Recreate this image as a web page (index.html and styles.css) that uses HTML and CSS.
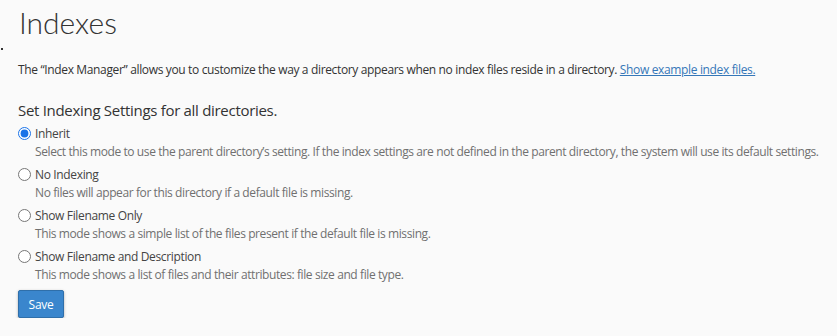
FILE: index.html
```html
<!DOCTYPE html>
<html lang="en">
<head>
    <meta charset="UTF-8">
    <meta name="viewport" content="width=device-width, initial-scale=1.0">
    <title>Indexes</title>
    <link rel="stylesheet" href="styles.css">
</head>
<body>

<span class="marca"></span>

<div class="pagina">
    <h1>Indexes</h1>

    <p class="intro">The “Index Manager” allows you to customize the way a directory appears when no index files reside in a directory. <a href="#">Show example index files.</a></p>

    <h2>Set Indexing Settings for all directories.</h2>

    <form class="opcoes">
        <!-- Opções de indexação -->
        <div class="opcao">
            <label><input type="radio" name="idx" checked> Inherit</label>
            <p class="ajuda">Select this mode to use the parent directory’s setting. If the index settings are not defined in the parent directory, the system will use its default settings.</p>
        </div>
        <div class="opcao">
            <label><input type="radio" name="idx"> No Indexing</label>
            <p class="ajuda">No files will appear for this directory if a default file is missing.</p>
        </div>
        <div class="opcao">
            <label><input type="radio" name="idx"> Show Filename Only</label>
            <p class="ajuda">This mode shows a simple list of the files present if the default file is missing.</p>
        </div>
        <div class="opcao">
            <label><input type="radio" name="idx"> Show Filename and Description</label>
            <p class="ajuda">This mode shows a list of files and their attributes: file size and file type.</p>
        </div>

        <button type="button" class="btn-salvar">Save</button>
    </form>
</div>

</body>
</html>
```

FILE: styles.css
```css
body {
    font-family: "Open Sans", Arial, sans-serif;
    letter-spacing: -0.35px;
    background-color: #fafafa;
    color: #333;
    margin: 0;
    padding: 0;
}

.marca {
    position: absolute;
    left: 1px;
    top: 48px;
    width: 2px;
    height: 2px;
    background-color: #333;
}

.pagina {
    padding: 0 0 0 18px;
}

h1 {
    font-family: Lato, "Open Sans", sans-serif;
    font-size: 30px;
    font-weight: 300;
    letter-spacing: 0;
    line-height: 41px;
    margin: 2px 0 0 1px;
    color: #333;
}

.intro {
    font-size: 12px;
    line-height: 17px;
    margin: 18px 0 0;
}

.intro a {
    color: #3577b8;
}

h2 {
    font-size: 15px;
    font-weight: 400;
    letter-spacing: -0.3px;
    line-height: 21px;
    margin: 22px 0 0;
}

.opcoes {
    margin-top: 4px;
}

.opcao {
    margin-bottom: 6px;
}

.opcao label {
    display: flex;
    align-items: center;
    font-size: 12px;
    line-height: 17px;
    color: #444;
}

.opcao input {
    width: 13px;
    height: 13px;
    margin: 0 4px 0 0;
    accent-color: #1a73e8;
}

.ajuda {
    font-size: 12px;
    letter-spacing: -0.4px;
    line-height: 17px;
    color: #707070;
    margin: 1px 0 0 17px;
}

.btn-salvar {
    font-family: "Open Sans", Arial, sans-serif;
    font-size: 12px;
    letter-spacing: -0.3px;
    color: #fff;
    background-color: #3a86cd;
    border: 1px solid #2f6faa;
    border-radius: 2px;
    width: 46px;
    height: 28px;
    padding: 0;
    margin-top: 1px;
    box-shadow: 0 1px 3px rgba(0, 0, 0, 0.3);
    cursor: pointer;
}
```
